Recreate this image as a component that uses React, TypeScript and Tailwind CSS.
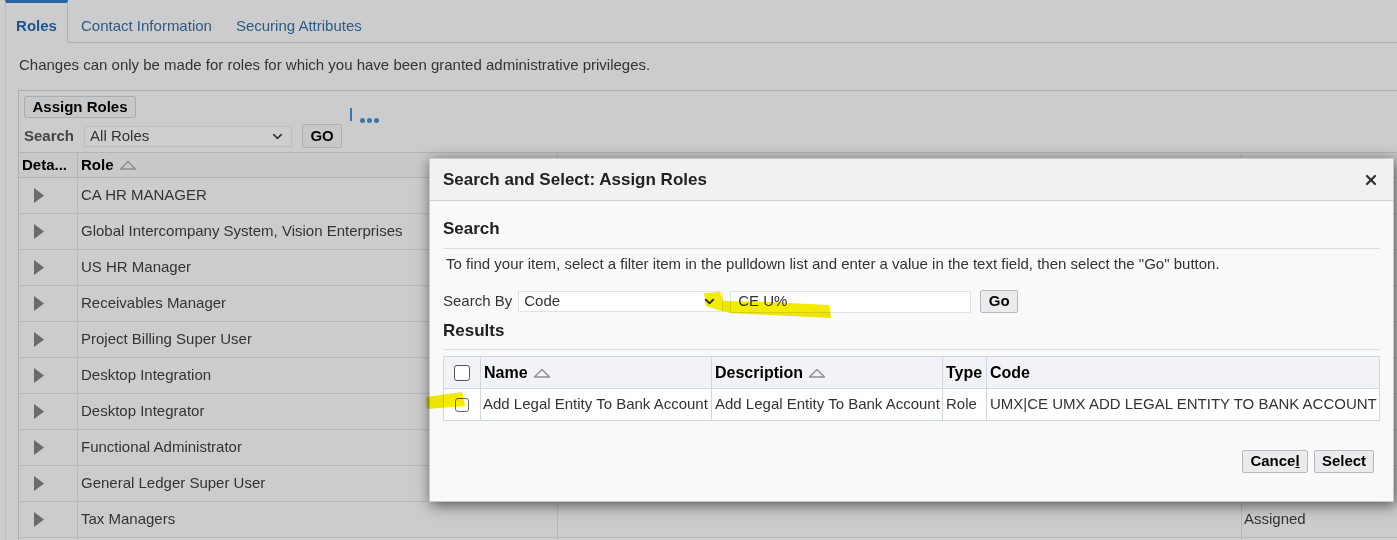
import React from 'react';
import { ChevronDown, X } from 'lucide-react';

const roles = [
  'CA HR MANAGER',
  'Global Intercompany System, Vision Enterprises',
  'US HR Manager',
  'Receivables Manager',
  'Project Billing Super User',
  'Desktop Integration',
  'Desktop Integrator',
  'Functional Administrator',
  'General Ledger Super User',
  'Tax Managers',
  '',
];

function SortArrow() {
  return (
    <svg width="18" height="10" viewBox="0 0 18 10" className="ml-[5px]">
      <path d="M1.5 9 L9 1.5 L16.5 9 Z" fill="none" stroke="#8a8f95" strokeWidth="1.4" strokeLinejoin="round" />
    </svg>
  );
}

function Triangle() {
  return (
    <svg width="10" height="15" viewBox="0 0 10 15">
      <path d="M0 0 L10 7.5 L0 15 Z" fill="#6b6b6b" />
    </svg>
  );
}

function Btn({ children, className = '' }: { children: React.ReactNode; className?: string }) {
  return (
    <button className={`flex items-center justify-center rounded-[2px] border text-[15px] font-bold text-black ${className}`}>
      {children}
    </button>
  );
}

function SearchDialog() {
  return (
    <div className="absolute left-[429px] top-[158px] flex h-[344px] w-[965px] flex-col border border-[#c4cad0] bg-[#f9f9f9] shadow-[2px_3px_14px_rgba(0,0,0,0.6)]">
      <div className="flex h-[42px] shrink-0 items-center justify-between border-b border-[#c9d2db] bg-[#f1f1f1] pl-[13px] pr-[14px]">
        <span className="text-[17px] font-bold text-[#222]">Search and Select: Assign Roles</span>
        <X size={16} strokeWidth={3.5} className="text-[#333]" />
      </div>
      <div className="flex flex-col pl-[13px] pr-[13px]">
        <div className="mt-[18px] border-b border-[#d5dde6] pb-[9px] text-[17px] font-bold leading-[20px] text-[#222]">Search</div>
        <div className="mt-[6px] pl-[3px] leading-[18px] text-[#333]">
          To find your item, select a filter item in the pulldown list and enter a value in the text field, then select the "Go" button.
        </div>
        <div className="mt-[17px] flex h-[23px] items-center">
          <span className="text-[#333]">Search By</span>
          <div className="ml-[6px] flex h-[21px] w-[205px] items-center justify-between border border-[#dfe3e7] bg-white pl-[5px] pr-[5px] text-[#333]">
            <span>Code</span>
            <ChevronDown size={15} strokeWidth={3} className="text-[#333]" />
          </div>
          <div className="ml-[7px] flex h-[22px] w-[241px] items-center border border-[#dfe3e7] bg-white pl-[7px] text-[#333]">CE U%</div>
          <Btn className="ml-[9px] h-[23px] w-[38px] border-[#b4bac0] bg-[#e9ebed]">Go</Btn>
        </div>
        <div className="mt-[8px] border-b border-[#d5dde6] pb-[8px] text-[17px] font-bold leading-[20px] text-[#222]">Results</div>
        <div className="mt-[6px] w-[937px] border border-[#cfd8e1] text-[15px]">
          <div className="grid h-[31px] grid-cols-[37px_231px_231px_44px_1fr] bg-[#f2f3f6] text-[16px] font-bold text-black">
            <div className="flex items-center justify-center border-r border-[#cfd8e1]">
              <span className="h-[16px] w-[16px] rounded-[3px] border border-[#555] bg-white" />
            </div>
            <div className="flex items-center border-r border-[#cfd8e1] pl-[3px]">Name<SortArrow /></div>
            <div className="flex items-center border-r border-[#cfd8e1] pl-[3px]">Description<SortArrow /></div>
            <div className="flex items-center border-r border-[#cfd8e1] pl-[3px]">Type</div>
            <div className="flex items-center pl-[3px]">Code</div>
          </div>
          <div className="grid h-[32px] grid-cols-[37px_231px_231px_44px_1fr] border-t border-[#cfd8e1] bg-white text-[#333]">
            <div className="flex items-center justify-center border-r border-[#cfd8e1]">
              <span className="h-[14px] w-[14px] rounded-[3px] border border-[#666] bg-white" />
            </div>
            <div className="flex items-center whitespace-nowrap border-r border-[#cfd8e1] pl-[2px]">Add Legal Entity To Bank Account</div>
            <div className="flex items-center whitespace-nowrap border-r border-[#cfd8e1] pl-[3px]">Add Legal Entity To Bank Account</div>
            <div className="flex items-center border-r border-[#cfd8e1] pl-[3px]">Role</div>
            <div className="flex items-center whitespace-nowrap pl-[3px]">UMX|CE UMX ADD LEGAL ENTITY TO BANK ACCOUNT</div>
          </div>
        </div>
        <div className="mt-[29px] flex justify-end gap-[6px] pr-[6px]">
          <Btn className="h-[23px] w-[66px] border-[#b4bac0] bg-[#e9ebed]">
            Cance<span className="underline">l</span>
          </Btn>
          <Btn className="h-[23px] w-[60px] border-[#b4bac0] bg-[#e9ebed]">Select</Btn>
        </div>
      </div>
    </div>
  );
}

export default function App() {
  return (
    <div className="relative h-[540px] w-[1397px] overflow-hidden bg-[#cccccc] font-['Liberation_Sans',Arial,sans-serif] text-[15px] text-[#2f2f2f]">
      {/* tabs */}
      <div className="flex h-[43px] pl-[5px]">
        <div className="flex w-[63px] items-center justify-center border-l border-r border-t-[3px] border-l-[#b8bcc0] border-r-[#aab0b6] border-t-[#2a64a0] pt-[6px] font-bold text-[#1d5590]">
          Roles
        </div>
        <div className="flex flex-1 items-center gap-[24px] border-b border-[#aab0b6] pl-[13px] pt-[10px] text-[#2d5a88]">
          <span>Contact Information</span>
          <span>Securing Attributes</span>
        </div>
      </div>

      {/* content */}
      <div className="ml-[5px] flex h-[497px] flex-col border-l border-[#b8bcc0] pl-[12px]">
        <div className="mt-[13px] pl-[1px] leading-[18px] text-[#333]">
          Changes can only be made for roles for which you have been granted administrative privileges.
        </div>
        <div className="mt-[16px] flex flex-1 flex-col border-l border-t border-[#aab0b6]">
          <div className="flex">
            <div className="flex flex-col pl-[5px]">
              <Btn className="mt-[5px] h-[22px] w-[112px] border-[#a9aeb3] bg-[#c6c8ca]">Assign Roles</Btn>
              <div className="mt-[6px] flex items-center">
                <span className="font-bold text-[#444]">Search</span>
                <div className="ml-[10px] flex h-[21px] w-[208px] items-center justify-between border border-[#b9bec3] bg-[#cecece] pl-[5px] pr-[6px] text-[#333]">
                  <span>All Roles</span>
                  <ChevronDown size={15} strokeWidth={2.5} className="text-[#333]" />
                </div>
                <Btn className="ml-[10px] h-[24px] w-[40px] border-[#a9aeb3] bg-[#c6c8ca]">GO</Btn>
              </div>
            </div>
            <div className="ml-[8px] mt-[17px] flex items-start">
              <span className="h-[13px] w-[2px] bg-[#3c74ad]" />
              <div className="ml-[8px] mt-[10px] flex gap-[2px]">
                <span className="h-[5px] w-[5px] rounded-full bg-[#3c74ad]" />
                <span className="h-[5px] w-[5px] rounded-full bg-[#3c74ad]" />
                <span className="h-[5px] w-[5px] rounded-full bg-[#3c74ad]" />
              </div>
            </div>
          </div>

          {/* roles table */}
          <div className="mt-[4px] flex flex-col border-t border-[#b0b5ba]">
            <div className="grid h-[25px] grid-cols-[59px_480px_684px_1fr] border-b border-[#b0b5ba] bg-[#c9c9c9] font-bold text-black">
              <div className="flex items-center border-r border-[#b0b5ba] pl-[3px]">Deta...</div>
              <div className="flex items-center border-r border-[#b0b5ba] pl-[3px]">Role<SortArrow /></div>
              <div className="border-r border-[#b0b5ba]" />
              <div />
            </div>
            {roles.map((r, i) => (
              <div key={i} className="grid h-[36px] shrink-0 grid-cols-[59px_480px_684px_1fr] border-b border-[#b5b9bd]">
                <div className="flex items-center border-r border-[#b5b9bd] pl-[15px]">
                  {r && <Triangle />}
                </div>
                <div className="flex items-center border-r border-[#b5b9bd] pl-[3px] text-[#333]">{r}</div>
                <div className="border-r border-[#b5b9bd]" />
                <div className="flex items-center pl-[2px] text-[#333]">{i === 9 ? 'Assigned' : ''}</div>
              </div>
            ))}
          </div>
        </div>
      </div>

      <SearchDialog />

      {/* highlighter marks */}
      <svg className="pointer-events-none absolute left-0 top-0 mix-blend-multiply" width="1397" height="540" viewBox="0 0 1397 540">
        <path d="M704 293 L720 292 L723 301 L770 302 L829 305 L831 318 L790 316 L730 313 L718 310 L706 306 Z" fill="#f3eb00" />
        <path d="M426 397 L462 392 L465 406 L427 409 Z" fill="#f3eb00" />
      </svg>
    </div>
  );
}
